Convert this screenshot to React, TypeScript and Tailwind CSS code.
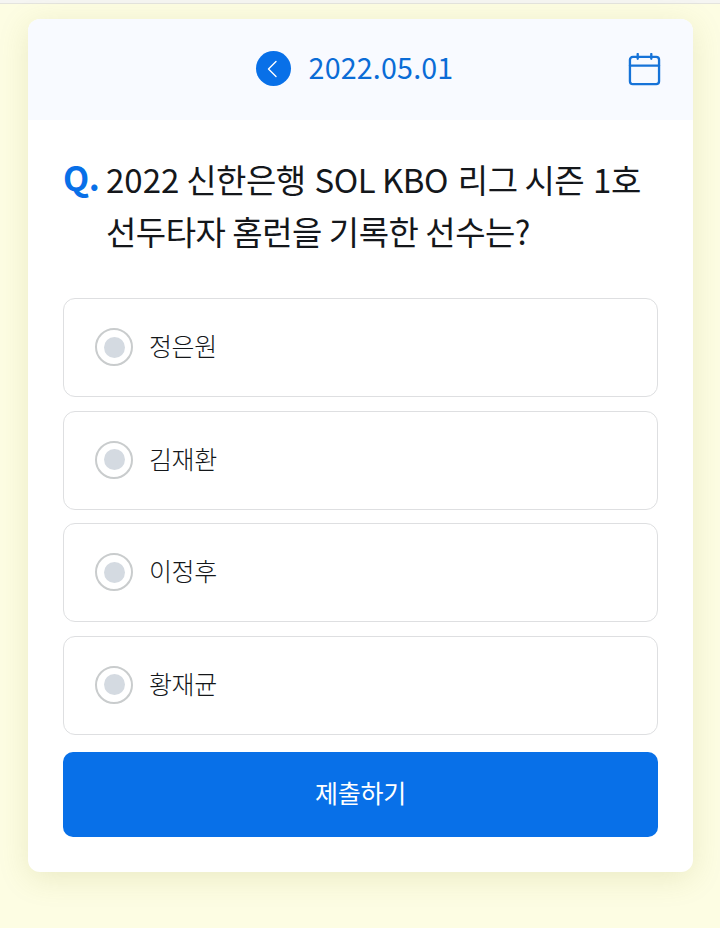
const font = { fontFamily: '"Noto Sans CJK KR", "Noto Sans", sans-serif' };

const options = ["정은원", "김재환", "이정후", "황재균"];

export default function App() {
  return (
    <div style={font} className="h-[928px] overflow-hidden bg-[#fdfde3]">
      <div className="h-[4px] border-b border-[#e4e4de] bg-[#f5f5f2]" />
      <div className="px-[28px] pt-[15px]">
        <div className="w-[665px] overflow-hidden rounded-[12px] bg-white shadow-[0_6px_30px_rgba(140,140,50,0.17)]">
          <header className="relative flex h-[101px] items-center justify-center gap-[18px] bg-[#f8faff] pr-[12px] pb-[2px]">
            <button className="flex h-[35px] w-[35px] items-center justify-center rounded-full bg-[#0870e8]">
              <svg width="14" height="18" viewBox="0 0 14 18" fill="none">
                <path d="M10 1.5 L2.5 9 L10 16.5" stroke="white" strokeWidth="1.4" strokeLinecap="round" strokeLinejoin="round" />
              </svg>
            </button>
            <span className="pb-[3px] text-[28.6px] leading-none font-normal tracking-[0.2px] text-[#0a6cd6]">2022.05.01</span>
            <svg className="absolute top-[34px] right-[32px]" width="33" height="33" viewBox="0 0 34 34" fill="none">
              <rect x="2" y="4" width="30" height="28" rx="3" stroke="#1673d8" strokeWidth="2.4" />
              <path d="M2 13 H32 M10 1 V6 M24 1 V6" stroke="#1673d8" strokeWidth="2.4" strokeLinecap="round" />
            </svg>
          </header>

          <main className="px-[35px] pt-[33px] pb-[35px]">
            <div className="flex items-start">
              <span className="w-[43px] shrink-0 text-[34px] leading-[48px] font-bold tracking-[-0.5px] text-[#0870e8]">Q.</span>
              <h1 className="text-[33px] leading-[52px] font-normal tracking-[-0.5px] whitespace-nowrap text-[#14171b]">
                <span className="tracking-[0px]">2022</span> 신한은행 <span className="mr-[3px] ml-[2px]">SOL KBO</span> 리그 <span className="mr-[2px]">시즌</span> 1호
                <br />
                선두타자 홈런을 기록한 선수는?
              </h1>
            </div>

            <ul className="mt-[41px] flex flex-col gap-[13.67px]">
              {options.map((name) => (
                <li
                  key={name}
                  className="flex h-[99px] items-center gap-[16px] rounded-[12px] border border-[#dedfe1] pl-[31px]"
                >
                  <span className="mb-[1px] flex h-[38px] w-[38px] items-center justify-center rounded-full border-2 border-[#c9cccd]">
                    <span className="h-[21px] w-[21px] rounded-full bg-[#d4dae1]" />
                  </span>
                  <span className="pb-[4px] text-[25px] leading-none font-light tracking-[-0.4px] text-[#14171a]">{name}</span>
                </li>
              ))}
            </ul>

            <button className="mt-[17px] h-[85px] w-full rounded-[10px] bg-[#0870e8] pb-[3px] text-[25px] font-normal tracking-[-0.2px] text-white">
              제출하기
            </button>
          </main>
        </div>
      </div>
    </div>
  );
}
